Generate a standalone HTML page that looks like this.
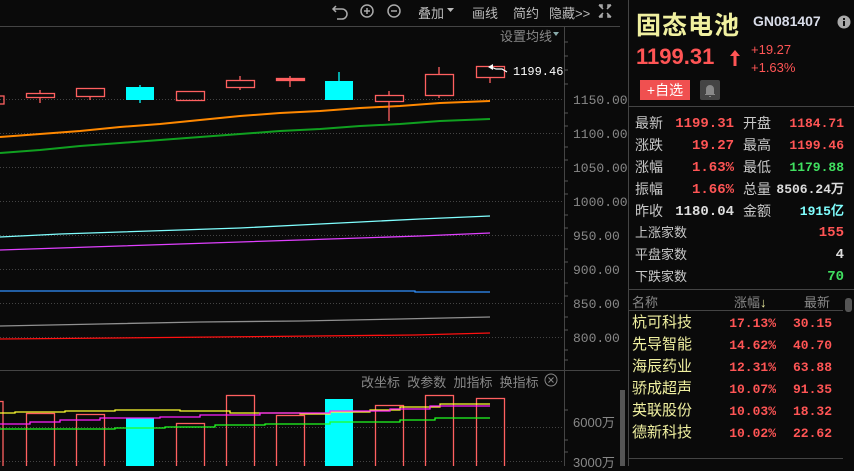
<!DOCTYPE html><html><head><meta charset="utf-8"><style>
body{margin:0;width:854px;height:466px;background:#0a0a0a;overflow:hidden;position:relative;font-family:"Liberation Sans","Noto Sans CJK SC",sans-serif}
.a{position:absolute;white-space:nowrap}
.g{color:#c8c8c8}.r{color:#ff5555}.y{color:#f0f0a0}
.lab{font-size:14px;color:#c8c8c8}
.num{font-family:"Liberation Mono","DejaVu Sans Mono",monospace;font-size:13px;font-weight:bold}
</style></head><body>
<svg class="a" style="left:0;top:0" width="628" height="466">
<g stroke="#aaa" stroke-width="1.5" fill="none">
<path d="M336 6 L333 9 L336 12 M333 9 H342 A5 5 0 0 1 342 19 H337"/>
<circle cx="367" cy="11" r="6"/><path d="M364 11h6M367 8v6"/>
<circle cx="394" cy="11" r="6"/><path d="M391 11h6"/>
<path d="M599 5h3v3M599 5l4 4M611 5h-3v3M611 5l-4 4M599 17h3v-3M599 17l4-4M611 17h-3v-3M611 17l-4-4"/>
</g>
<path d="M447 8h7l-3.5 4z" fill="#bbb"/>
<line x1="0" y1="26.5" x2="620" y2="26.5" stroke="#444"/>
<line x1="564.5" y1="27" x2="564.5" y2="466" stroke="#444"/>
<line x1="0" y1="370.5" x2="620" y2="370.5" stroke="#444"/>
<path d="M553 32h6l-3 4z" fill="#8aa"/>
<g stroke="#444" stroke-dasharray="1 2">
<path d="M0 99.5H564M0 133.5H564M0 167.5H564M0 201.5H564M0 235.5H564M0 269.5H564M0 303.5H564M0 337.5H564M0 427.5H564M0 461.5H564"/>
</g>
<g stroke="#555"><path d="M564 42h4M564 56h4M564 70h4M564 84h4M564 113h4M564 126h4M564 147h4M564 160h4M564 181h4M564 194h4M564 215h4M564 228h4M564 249h4M564 262h4M564 283h4M564 296h4M564 317h4M564 330h4M564 350h4M564 360h4M564 410h4M564 440h4M564 452h4"/></g>
<g fill="#888" font-family="Liberation Mono,monospace" font-size="13">
<text x="573" y="104">1150.00</text><text x="573" y="138">1100.00</text><text x="573" y="172">1050.00</text><text x="573" y="206">1000.00</text><text x="573" y="240">950.00</text><text x="573" y="274">900.00</text><text x="573" y="308">850.00</text><text x="573" y="342">800.00</text>
</g>
<g fill="none" stroke-width="2">
<path d="M0 137 L40 134 L80 131 L120 127 L160 124 L200 120 L240 116 L280 113 L320 111 L360 108 L400 106 L440 103 L490 101" stroke="#ff8800"/>
<path d="M0 153 L40 150 L80 146 L120 143 L160 140 L200 137 L240 134 L280 131 L320 129 L360 126 L400 124 L440 121 L490 119" stroke="#10a020"/>
</g>
<g fill="none" stroke-width="1.3">
<path d="M0 237 L60 234 L120 232 L180 230 L240 228 L300 225 L360 222 L420 219 L490 216" stroke="#80ffff"/>
<path d="M0 250 L60 248 L120 246 L180 244 L240 242 L300 240 L360 238 L420 236 L490 233" stroke="#e040ff"/>
<path d="M0 291 H415 V292 H490" stroke="#3090ff"/>
<path d="M0 326 L100 324 L200 322 L300 321 L400 319 L490 317" stroke="#909090"/>
<path d="M0 339 L115 338 L215 337 L315 336 L415 335 L490 333" stroke="#ff1010"/>
</g>
<g stroke="#ff6060" stroke-width="1.3" fill="none">
<rect x="-2" y="96" width="6" height="8"/>
<path d="M40 90v13"/><rect x="26.5" y="93.5" width="28" height="4" fill="#0a0a0a"/>
<path d="M90 96v4"/><rect x="76.5" y="88.5" width="28" height="8"/>
<rect x="176.5" y="91.5" width="28" height="9"/>
<path d="M240 76v14"/><rect x="226.5" y="80.5" width="28" height="7" fill="#0a0a0a"/>
<path d="M290 76v11"/><rect x="276.5" y="78.5" width="28" height="2" fill="#ff6060"/>
<path d="M389 91v30"/><rect x="375.5" y="95.5" width="28" height="6" fill="#0a0a0a"/>
<path d="M439 67v31"/><rect x="425.5" y="74.5" width="28" height="21" fill="#0a0a0a"/>
<path d="M490 78v5"/><rect x="476.5" y="66.5" width="28" height="11"/>
</g>
<path d="M140 85v18M339 72v10" stroke="#00ffff" stroke-width="1.3"/>
<rect x="126" y="87" width="28" height="13" fill="#00ffff"/>
<rect x="325" y="81" width="28" height="19" fill="#00ffff"/>
<path d="M491 67l5 2 6 0 5 3" stroke="#fff" fill="none" stroke-width="1.2"/><path d="M488 67l5-3v6z" fill="#fff"/>
<text x="513" y="75" fill="#fff" font-family="Liberation Mono,monospace" font-size="12">1199.46</text>
<g stroke="#ff6060" stroke-width="1.3" fill="none">
<rect x="-3" y="401.5" width="6" height="70"/>
<rect x="26.5" y="413.5" width="28" height="60"/><rect x="76.5" y="414.5" width="28" height="60"/>
<rect x="176.5" y="423.5" width="28" height="60"/><rect x="226.5" y="395.5" width="28" height="80"/>
<rect x="276.5" y="415.5" width="28" height="60"/><rect x="375.5" y="405.5" width="28" height="70"/>
<rect x="425.5" y="395.5" width="28" height="80"/><rect x="476.5" y="398.5" width="28" height="80"/>
</g>
<rect x="126" y="418" width="28" height="50" fill="#00ffff"/>
<rect x="325" y="399" width="28" height="70" fill="#00ffff"/>
<g fill="none" stroke-width="1.3">
<path d="M0 413 H15 V412 H65 V411 H115 V410 H180 V411 H230 V413 H300 V414 H330 V412 H370 V410 H400 V407 H440 V404 H490" stroke="#ffff30"/>
<path d="M0 424 H30 V422 H60 V420 H100 V418 H160 V417 H200 V415 H260 V413 H330 V411 H390 V409 H430 V406 H490" stroke="#ff20ff"/>
<path d="M0 429 H115 V428 H165 V427 H215 V425 H265 V424 H330 V422 H400 V420 H435 V418 H490" stroke="#20ff20"/>
</g>
<rect x="620" y="390" width="5" height="76" fill="#555"/>
</svg>
<div class="a" style="top:3px;left:418px;font-size:13px;color:#bbb">叠加</div>
<div class="a" style="top:3px;left:472px;font-size:13px;color:#bbb">画线</div>
<div class="a" style="top:3px;left:513px;font-size:13px;color:#bbb">简约</div>
<div class="a" style="top:3px;left:549px;font-size:13px;color:#bbb">隐藏&gt;&gt;</div>
<div class="a" style="top:26px;left:500px;font-size:13px;color:#888">设置均线</div>
<div class="a" style="top:372px;left:361px;font-size:13px;color:#888">改坐标&nbsp;&nbsp;改参数&nbsp;&nbsp;加指标&nbsp;&nbsp;换指标</div>
<svg class="a" style="left:543px;top:372px" width="16" height="16"><circle cx="8" cy="8" r="6" stroke="#888" fill="none"/><path d="M5.5 5.5l5 5M10.5 5.5l-5 5" stroke="#888"/></svg>
<div class="a" style="top:412px;left:573px;font-size:13px;color:#888">6000万</div>
<div class="a" style="top:452px;left:573px;font-size:13px;color:#888">3000万</div>
<div class="a" style="left:628px;top:0;width:1px;height:466px;background:#444"></div>
<div class="a y" style="left:636px;top:6px;font-size:25px;font-weight:bold;letter-spacing:1px">固态电池</div>
<div class="a" style="left:753px;top:13px;font-size:14px;font-weight:bold;color:#d8dce8">GN081407</div>
<svg class="a" style="left:837px;top:15px" width="14" height="14"><circle cx="7" cy="7" r="6.5" fill="#aaa"/><rect x="6" y="6" width="2" height="5" fill="#111"/><rect x="6" y="3" width="2" height="2" fill="#111"/></svg>
<div class="a r" style="left:636px;top:44px;font-size:22px;font-weight:bold">1199.31</div>
<svg class="a" style="left:729px;top:49px" width="12" height="18"><path d="M6 1L1 7h3.5v10h3V7H11z" fill="#ff5555"/></svg>
<div class="a r" style="left:751px;top:42px;font-size:13px">+19.27</div>
<div class="a r" style="left:751px;top:60px;font-size:13px">+1.63%</div>
<div class="a" style="left:640px;top:80px;width:50px;height:20px;background:#f05050;color:#fff;font-size:14px;line-height:20px;text-align:center">+自选</div>
<div class="a" style="left:700px;top:80px;width:20px;height:20px;background:#444;border-radius:2px"><svg width="20" height="20"><path d="M6 14V9a4 4 0 0 1 8 0v5h1v1H5v-1z M9 16h2v1H9z" fill="#888"/></svg></div>
<div class="a" style="left:629px;top:106px;width:225px;height:1px;background:#444"></div>
<div class="a lab" style="left:635px;top:112px;line-height:22px">最新<br>涨跌<br>涨幅<br>振幅<br>昨收</div>
<div class="a num" style="left:660px;width:74px;text-align:right;top:113px;line-height:22px;font-size:14px"><span class="r">1199.31</span><br><span class="r">19.27</span><br><span class="r">1.63%</span><br><span class="r">1.66%</span><br><span style="color:#ddd">1180.04</span></div>
<div class="a lab" style="left:743px;top:112px;line-height:22px">开盘<br>最高<br>最低<br>总量<br>金额</div>
<div class="a num" style="left:770px;width:74px;text-align:right;top:113px;line-height:22px"><span class="r">1184.71</span><br><span class="r">1199.46</span><br><span style="color:#40e060">1179.88</span><br><span style="color:#ddd">8506.24万</span><br><span style="color:#80ffff">1915亿</span></div>
<div class="a" style="left:635px;top:222px;font-size:13px;color:#c8c8c8;line-height:22px">上涨家数<br>平盘家数<br>下跌家数</div>
<div class="a num" style="left:780px;width:64px;text-align:right;top:222px;line-height:22px;font-size:14px"><span class="r">155</span><br><span style="color:#ddd">4</span><br><span style="color:#40e060">70</span></div>
<div class="a" style="left:629px;top:289px;width:225px;height:1px;background:#444"></div>
<div class="a" style="left:632px;top:292px;font-size:13px;color:#888">名称</div>
<div class="a" style="left:734px;top:292px;font-size:13px;color:#888">涨幅<span style="color:#f0f0a0">↓</span></div>
<div class="a" style="left:804px;top:292px;font-size:13px;color:#888">最新</div>
<div class="a" style="left:845px;top:298px;width:7px;height:14px;background:#555;border-radius:3px"></div>
<div class="a" style="left:629px;top:310px;width:214px;height:1px;background:#444"></div>
<div class="a y" style="left:632px;top:312px;font-size:15px;line-height:22px">杭可科技<br>先导智能<br>海辰药业<br>骄成超声<br>英联股份<br>德新科技</div>
<div class="a num r" style="left:720px;width:56px;text-align:right;top:313px;line-height:22px">17.13%<br>14.62%<br>12.31%<br>10.07%<br>10.03%<br>10.02%</div>
<div class="a num r" style="left:780px;width:52px;text-align:right;top:313px;line-height:22px">30.15<br>40.70<br>63.88<br>91.35<br>18.32<br>22.62</div>
<div class="a" style="left:629px;top:458px;width:214px;height:1px;background:#444"></div>
</body></html>
